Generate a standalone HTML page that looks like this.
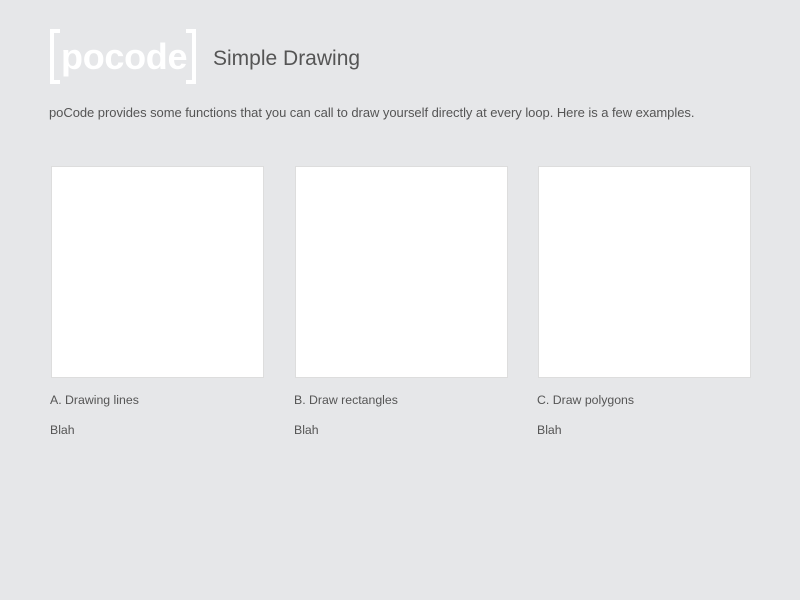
<!DOCTYPE html>
<html><head><style>
body{margin:0;width:800px;height:600px;background:#e6e7e9;font-family:"Liberation Sans",sans-serif;color:#555;position:relative;overflow:hidden}
.br{position:absolute;top:29px;width:6px;height:47px;border:4px solid #fff}
.logo{position:absolute;left:61px;top:37px;font-size:36px;line-height:40px;color:#fff;font-weight:bold;letter-spacing:-0.3px}
.title{position:absolute;left:213px;top:47px;font-size:21px;color:#555}
.intro{position:absolute;left:49px;top:105px;font-size:13px;letter-spacing:-0.05px}
.card{position:absolute;top:166px;width:213px;height:212px;background:#fff;border:1px solid #ddd;box-sizing:border-box}
.lab{position:absolute;top:393px;font-size:12.3px}
.blah{position:absolute;top:423px;font-size:12.3px}
</style></head><body>
<div class="br" style="left:50px;border-right:none"></div>
<div class="logo">pocode</div>
<div class="br" style="left:186px;border-left:none"></div>
<div class="title">Simple Drawing</div>
<div class="intro">poCode provides some functions that you can call to draw yourself directly at every loop. Here is a few examples.</div>
<div class="card" style="left:51px"></div>
<div class="card" style="left:295px"></div>
<div class="card" style="left:538px"></div>
<div class="lab" style="left:50px">A. Drawing lines</div>
<div class="lab" style="left:294px">B. Draw rectangles</div>
<div class="lab" style="left:537px">C. Draw polygons</div>
<div class="blah" style="left:50px">Blah</div>
<div class="blah" style="left:294px">Blah</div>
<div class="blah" style="left:537px">Blah</div>
</body></html>
